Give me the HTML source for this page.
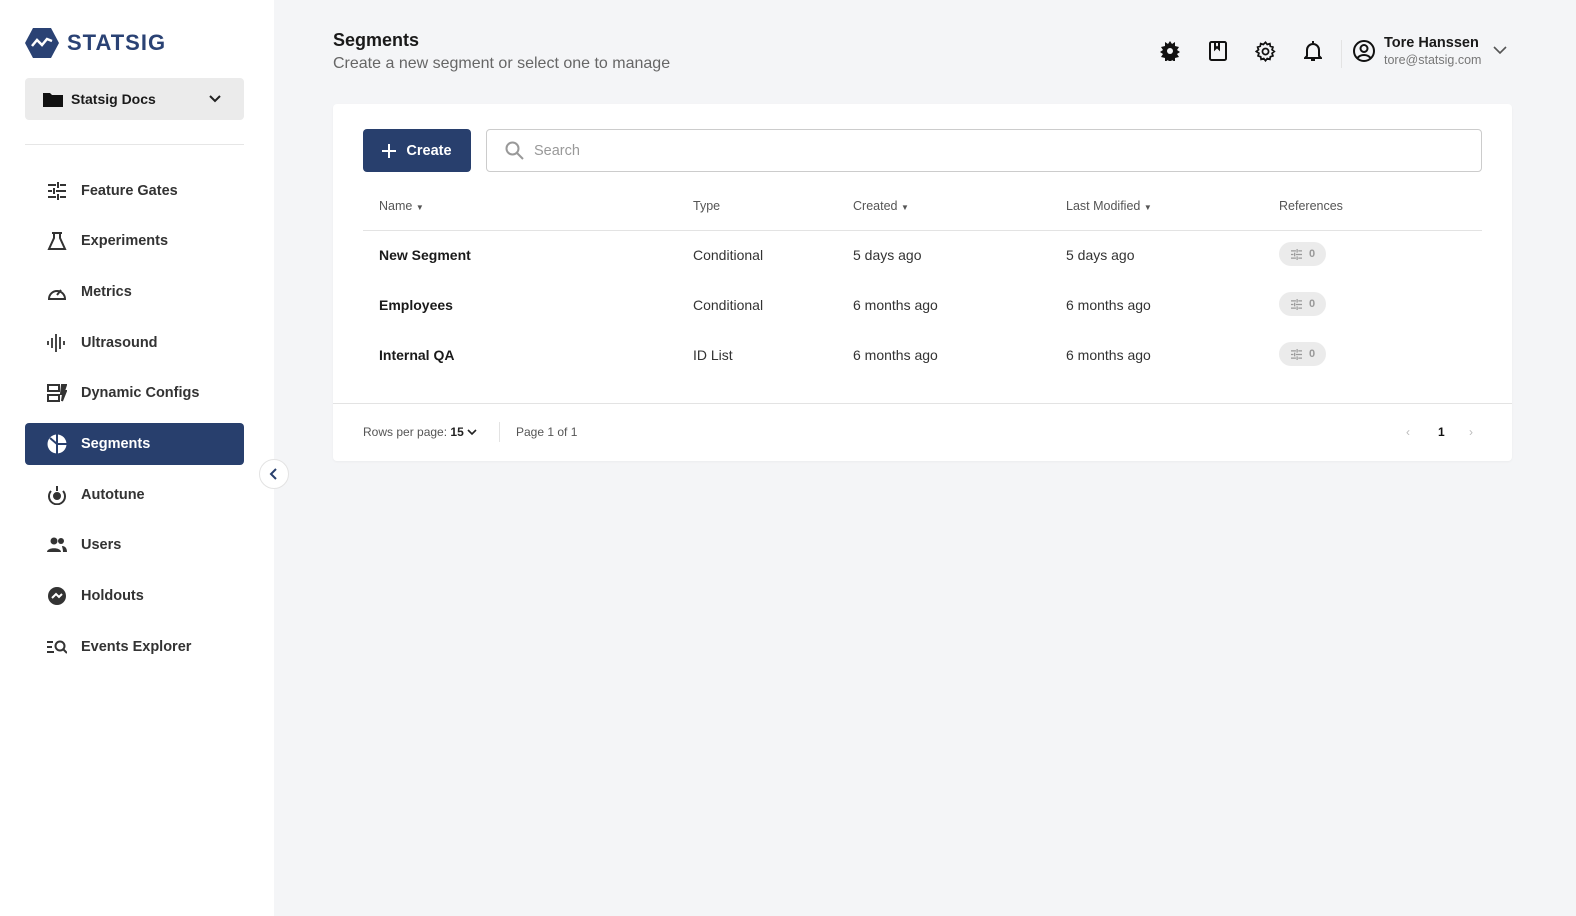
<!DOCTYPE html>
<html><head><meta charset="utf-8"><style>
*{box-sizing:border-box;margin:0;padding:0}
body{width:1576px;height:916px;background:#f4f5f7;font-family:"Liberation Sans",sans-serif;color:#1a1a1a;position:relative;overflow:hidden}
.side{position:absolute;left:0;top:0;width:274px;height:916px;background:#fff}
.logo{position:absolute;left:25px;top:27px;display:flex;align-items:center}
.logo span{font-weight:bold;font-size:22px;color:#2a4274;letter-spacing:1px;margin-left:8px}
.proj{position:absolute;left:25px;top:78px;width:219px;height:42px;background:#ebebeb;border-radius:4px;display:flex;align-items:center;padding-left:18px;font-weight:bold;font-size:14px}
.hr{position:absolute;left:25px;top:144px;width:219px;height:1px;background:#e6e6e6}
.nav{position:absolute;left:25px;width:219px;height:42px;display:flex;align-items:center;padding-left:22px;font-size:14.5px;font-weight:bold;color:#333;border-radius:4px}
.nav svg{margin-right:14px}
.nav.act{background:#283f6d;color:#fff}
.collapse{position:absolute;left:259px;top:459px;width:30px;height:30px;border-radius:50%;background:#fff;border:1px solid #e3e3e3;display:flex;align-items:center;justify-content:center}
.h1{position:absolute;left:333px;top:30px;font-size:18px;font-weight:bold}
.sub{position:absolute;left:333px;top:55px;font-size:16px;color:#666}
.card{position:absolute;left:333px;top:104px;width:1179px;height:357px;background:#fff;border-radius:4px;box-shadow:0 1px 2px rgba(0,0,0,.04)}
.btn{position:absolute;left:30px;top:25px;width:108px;height:43px;background:#283f6d;border-radius:4px;color:#fff;font-weight:bold;font-size:14.5px;display:flex;align-items:center;justify-content:center}
.search{position:absolute;left:153px;top:25px;width:996px;height:43px;border:1px solid #ccc;border-radius:4px;display:flex;align-items:center;padding-left:18px;color:#999;font-size:14.5px}
.th{position:absolute;top:95px;font-size:12.5px;color:#555}
.line{position:absolute;left:30px;top:126px;width:1119px;height:1px;background:#e3e3e3}
.td{position:absolute;font-size:14px;color:#333}
.td.b{font-weight:bold;color:#1a1a1a}
.pill{position:absolute;left:946px;width:47px;height:24px;border-radius:12px;background:#ebebeb;display:flex;align-items:center;justify-content:center;font-size:11px;font-weight:bold;color:#999;gap:6px}
.fline{position:absolute;left:0;top:299px;width:1179px;height:1px;background:#e3e3e3}
.foot{position:absolute;top:321px;font-size:12px;color:#555}
.icons svg{position:absolute;top:41px}
</style></head><body>
<div class="side">
<div class="logo"><svg width="34" height="32" viewBox="0 0 34 32"><polygon points="8,1 26,1 34,16 26,31 8,31 0,16" fill="#2a4274"/><polyline points="7,19 12,13 17,18 22,12 27,14" fill="none" stroke="#fff" stroke-width="2.5"/></svg><span>STATSIG</span></div>
<div class="proj"><svg width="20" height="16" style="margin-right:8px"><path d="M0 2h7l2 2h11v12H0z" fill="#111"/></svg>Statsig Docs<svg width="14" height="10" style="position:absolute;right:22px" viewBox="0 0 14 10"><polyline points="2,2 7,7 12,2" fill="none" stroke="#222" stroke-width="2"/></svg></div>
<div class="hr"></div>
<div class="nav" style="top:170px"><svg width="20" height="18" viewBox="0 0 20 18" stroke="#333" stroke-width="2"><path d="M1 3h8M13 3h6M11 0v6M1 9h4M9 9h10M7 6v6M1 15h8M13 15h6M11 12v6"/></svg>Feature Gates</div>
<div class="nav" style="top:220px"><svg width="20" height="18" viewBox="0 0 20 18" fill="none" stroke="#333" stroke-width="2"><path d="M5 1h10M7 1v5L2 17h16L13 6V1"/></svg>Experiments</div>
<div class="nav" style="top:271px"><svg width="20" height="18" viewBox="0 0 20 18" fill="none" stroke="#333" stroke-width="2"><path d="M2 16A8 8 0 1 1 18 16z"/><path d="M10 12l4-5"/></svg>Metrics</div>
<div class="nav" style="top:322px"><svg width="20" height="20" viewBox="0 0 20 20" stroke="#333" stroke-width="1.8"><path d="M1 8v4M5 5v10M9 1v18M13 4v12M17 8v4"/></svg>Ultrasound</div>
<div class="nav" style="top:372px"><svg width="20" height="18" viewBox="0 0 20 18" fill="none" stroke="#333" stroke-width="2"><rect x="1" y="1" width="11" height="6"/><rect x="1" y="11" width="11" height="6"/><path d="M15 1h4l-2 6h2l-4 10 1-7h-2z" fill="#333"/></svg>Dynamic Configs</div>
<div class="nav act" style="top:423px"><svg width="20" height="20" viewBox="0 0 20 20"><circle cx="10" cy="10" r="9.5" fill="#fff"/><path d="M10 0v20M10 10h10M10 10L3 4" stroke="#283f6d" stroke-width="2"/></svg>Segments</div>
<div class="nav" style="top:474px"><svg width="20" height="20" viewBox="0 0 20 20" fill="none" stroke="#333" stroke-width="2"><path d="M4 6a8 8 0 1 0 12 0"/><circle cx="10" cy="11" r="3" fill="#333"/><path d="M10 1v5"/></svg>Autotune</div>
<div class="nav" style="top:524px"><svg width="20" height="16" viewBox="0 0 20 16" fill="#333"><circle cx="7" cy="4" r="3.5"/><path d="M0 15c0-5 14-5 14 0z"/><circle cx="14" cy="4" r="3"/><path d="M15 9c3 0 5 2 5 6h-4c0-3-1-5-1-6z"/></svg>Users</div>
<div class="nav" style="top:575px"><svg width="20" height="20" viewBox="0 0 20 20"><circle cx="10" cy="10" r="9" fill="#333"/><path d="M5 12l4-4 3 3 3-3" stroke="#fff" stroke-width="2" fill="none"/></svg>Holdouts</div>
<div class="nav" style="top:626px"><svg width="20" height="16" viewBox="0 0 20 16" fill="none" stroke="#333" stroke-width="2"><path d="M0 3h6M0 8h5M0 13h7"/><circle cx="13" cy="7" r="4.5"/><path d="M16 10l4 4"/></svg>Events Explorer</div>
</div>
<div class="collapse"><svg width="10" height="12" viewBox="0 0 10 12"><polyline points="7,1 2,6 7,11" fill="none" stroke="#283f6d" stroke-width="2"/></svg></div>

<div class="h1">Segments</div>
<div class="sub">Create a new segment or select one to manage</div>
<div class="icons">
<svg style="left:1160px" width="20" height="20" viewBox="0 0 20 20"><path d="M10 0l2 3 3-2 0 4 4 1-2 3 3 2-3 2 2 3-4 1 0 4-3-2-2 3-2-3-3 2 0-4-4-1 2-3-3-2 3-2-2-3 4-1 0-4 3 2z" fill="#111"/><circle cx="10" cy="10" r="3" fill="#f4f5f7"/></svg>
<svg style="left:1209px" width="18" height="20" viewBox="0 0 18 20" fill="none" stroke="#111" stroke-width="2"><rect x="1" y="1" width="16" height="18" rx="1.5"/><path d="M6 1v7l2-2 2 2V1"/></svg>
<svg style="left:1255px" width="21" height="21" viewBox="0 0 24 24" fill="none" stroke="#111" stroke-width="2"><circle cx="12" cy="12" r="3.5"/><path d="M12 1.5l2 2.5 3-1 .5 3 3 1-1 3 2.5 2-2.5 2 1 3-3 1-.5 3-3-1-2 2.5-2-2.5-3 1-.5-3-3-1 1-3L1.5 12 4 10 3 7l3-1 .5-3 3 1z"/></svg>
<svg style="left:1304px" width="18" height="21" viewBox="0 0 18 21" fill="none" stroke="#111" stroke-width="2"><path d="M3 15V9a6 6 0 0 1 12 0v6l2 2H1z"/><path d="M9 0v2M7 19h4"/></svg>
</div>
<div style="position:absolute;left:1341px;top:40px;width:1px;height:28px;background:#e3e3e3"></div>
<svg style="position:absolute;left:1353px;top:40px" width="22" height="22" viewBox="0 0 22 22" fill="none" stroke="#111" stroke-width="2"><circle cx="11" cy="11" r="10"/><circle cx="11" cy="8.5" r="3.5"/><path d="M4.5 18c3-4 10-4 13 0"/></svg>
<div style="position:absolute;left:1384px;top:35px;font-size:14.5px;font-weight:bold">Tore Hanssen</div>
<div style="position:absolute;left:1384px;top:53px;font-size:12.5px;color:#777">tore@statsig.com</div>
<svg style="position:absolute;left:1493px;top:46px" width="14" height="9" viewBox="0 0 14 9"><polyline points="1,1 7,7 13,1" fill="none" stroke="#555" stroke-width="1.6"/></svg>

<div class="card">
<div class="btn"><svg width="14" height="14" style="margin-right:10px"><path d="M7 0v14M0 7h14" stroke="#fff" stroke-width="2"/></svg>Create</div>
<div class="search"><svg width="19" height="19" viewBox="0 0 19 19" fill="none" stroke="#999" stroke-width="2" style="margin-right:10px"><circle cx="7.5" cy="7.5" r="6"/><path d="M12 12l6 6"/></svg>Search</div>
<div class="th" style="left:46px">Name <span style="font-size:8px">▼</span></div>
<div class="th" style="left:360px">Type</div>
<div class="th" style="left:520px">Created <span style="font-size:8px">▼</span></div>
<div class="th" style="left:733px">Last Modified <span style="font-size:8px">▼</span></div>
<div class="th" style="left:946px">References</div>
<div class="line"></div>
<div class="td b" style="left:46px;top:143px">New Segment</div><div class="td" style="left:360px;top:143px">Conditional</div><div class="td" style="left:520px;top:143px">5 days ago</div><div class="td" style="left:733px;top:143px">5 days ago</div>
<div class="td b" style="left:46px;top:193px">Employees</div><div class="td" style="left:360px;top:193px">Conditional</div><div class="td" style="left:520px;top:193px">6 months ago</div><div class="td" style="left:733px;top:193px">6 months ago</div>
<div class="td b" style="left:46px;top:243px">Internal QA</div><div class="td" style="left:360px;top:243px">ID List</div><div class="td" style="left:520px;top:243px">6 months ago</div><div class="td" style="left:733px;top:243px">6 months ago</div>
<div class="pill" style="top:138px"><svg width="13" height="11" viewBox="0 0 20 18" stroke="#999" stroke-width="2"><path d="M1 3h8M13 3h6M11 0v6M1 9h4M9 9h10M7 6v6M1 15h8M13 15h6M11 12v6"/></svg>0</div>
<div class="pill" style="top:188px"><svg width="13" height="11" viewBox="0 0 20 18" stroke="#999" stroke-width="2"><path d="M1 3h8M13 3h6M11 0v6M1 9h4M9 9h10M7 6v6M1 15h8M13 15h6M11 12v6"/></svg>0</div>
<div class="pill" style="top:238px"><svg width="13" height="11" viewBox="0 0 20 18" stroke="#999" stroke-width="2"><path d="M1 3h8M13 3h6M11 0v6M1 9h4M9 9h10M7 6v6M1 15h8M13 15h6M11 12v6"/></svg>0</div>
<div class="fline"></div>
<div class="foot" style="left:30px">Rows per page: <b style="color:#222">15</b> <svg width="10" height="7" viewBox="0 0 10 7"><polyline points="1,1 5,5 9,1" fill="none" stroke="#222" stroke-width="1.6"/></svg></div>
<div style="position:absolute;left:166px;top:318px;width:1px;height:20px;background:#e3e3e3"></div>
<div class="foot" style="left:183px">Page 1 of 1</div>
<div class="foot" style="left:1073px;color:#bbb">‹</div>
<div class="foot" style="left:1105px;color:#111;font-weight:bold">1</div>
<div class="foot" style="left:1136px;color:#bbb">›</div>
</div>
</body></html>
